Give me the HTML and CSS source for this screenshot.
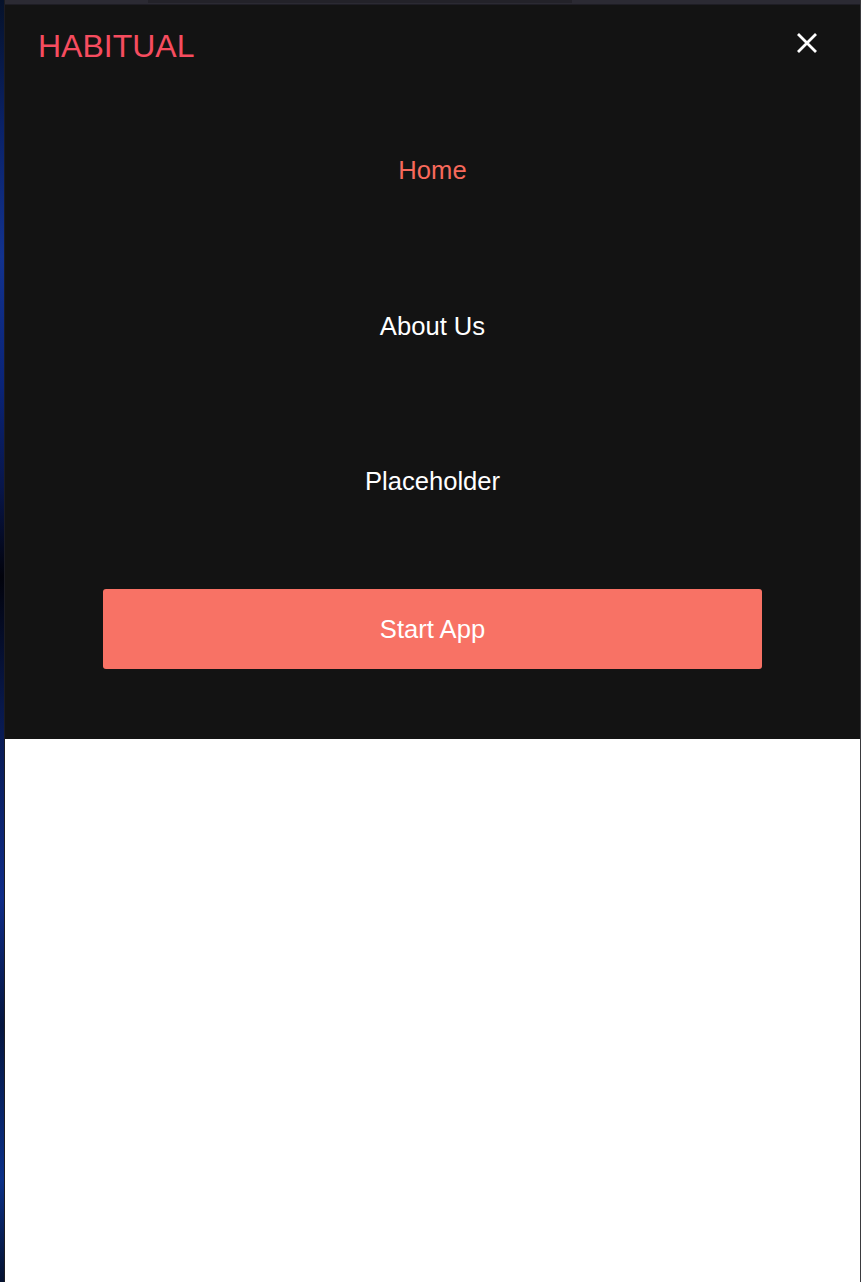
FILE: index.html
```html
<!DOCTYPE html>
<html lang="en">
<head>
<meta charset="utf-8">
<title>Habitual</title>
<link rel="stylesheet" href="styles.css">
</head>
<body>
<div class="desktop">
  <div class="wallpaper"></div>
  <div class="window">
    <div class="titlebar"><div class="tab"></div></div>
    <div class="menu">
      <header class="header">
        <span class="logo">HABITUAL</span>
        <button class="close" aria-label="Close menu">
          <svg width="22" height="22" viewBox="0 0 22 22"><path d="M2 2L20 20M20 2L2 20" stroke="#fff" stroke-width="2.8" stroke-linecap="butt"/></svg>
        </button>
      </header>
      <nav class="nav">
        <a class="nav-link active" href="#">Home</a>
        <a class="nav-link" href="#">About Us</a>
        <a class="nav-link" href="#">Placeholder</a>
      </nav>
      <a class="start" href="#">Start App</a>
    </div>
    <main class="content"></main>
  </div>
</div>
</body>
</html>
```
FILE: styles.css
```css
html, body {
  margin: 0;
  padding: 0;
  height: 100%;
}
body {
  font-family: "Liberation Sans", Arial, sans-serif;
  background: #000;
  overflow: hidden;
}
.desktop {
  display: flex;
  height: 1282px;
}
.wallpaper {
  width: 4px;
  flex: none;
  background: linear-gradient(to bottom, #06122a 0%, #0a2268 10%, #12328e 20%, #0a2478 30%, #08164a 38%, #02030c 45%, #08184a 55%, #0f2c88 70%, #051640 80%, #0b3088 92%, #051230 100%);
}
.window {
  flex: 1;
  display: flex;
  flex-direction: column;
  border-left: 1px solid #1c1c22;
  border-right: 1px solid #3a3a3e;
  background: #fff;
}
.titlebar {
  height: 4px;
  background: #2b2a33;
  border-bottom: 1px solid #1e1d24;
}
.tab {
  margin-left: 143px;
  width: 424px;
  height: 3px;
  background: #232229;
}
.menu {
  background: #131313;
  display: flex;
  flex-direction: column;
  align-items: center;
  height: 734px;
}
.header {
  align-self: stretch;
  display: flex;
  justify-content: space-between;
  align-items: flex-start;
  padding: 25px 42px 0 33px;
  height: 63px;
}
.logo {
  color: #f64c5f;
  font-size: 32px;
  line-height: 32px;
}
.close {
  background: none;
  border: 0;
  padding: 0;
  margin-top: 2px;
  width: 22px;
  height: 22px;
  cursor: pointer;
}
.close svg {
  display: block;
}
.nav {
  display: flex;
  flex-direction: column;
  align-items: center;
  align-self: stretch;
}
.nav-link {
  display: block;
  text-align: center;
  color: #fff;
  text-decoration: none;
  font-size: 25.6px;
  line-height: 155.5px;
}
.nav-link.active {
  color: #f8695b;
}
.start {
  margin-top: 29px;
  width: 659px;
  height: 80px;
  line-height: 80px;
  background: #f87265;
  color: #fff;
  border-radius: 3px;
  text-align: center;
  text-decoration: none;
  font-size: 25.6px;
}
.content {
  flex: 1;
  background: #fff;
}
```
